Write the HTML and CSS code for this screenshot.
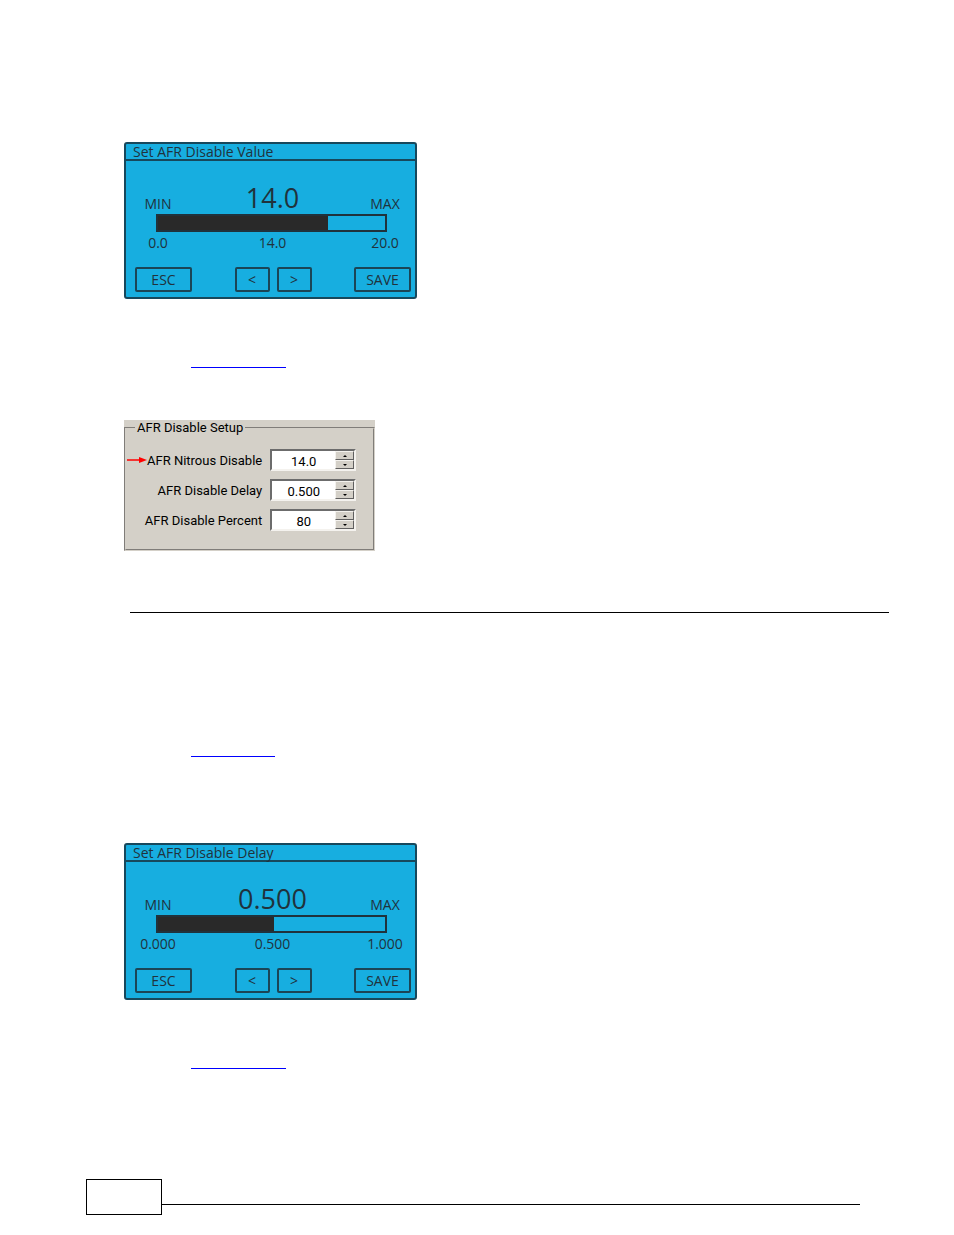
FILE: index.html
```html
<!DOCTYPE html>
<html lang="en">
<head>
    <meta charset="UTF-8">
    <meta name="viewport" content="width=device-width, initial-scale=1.0">
    <title>AFR Disable</title>
    <link rel="stylesheet" href="styles.css">
</head>
<body>

    <main>
        <section class="screen">
            <h2>Set AFR Disable Value</h2>
            <div class="readings">
                <span>MIN</span>
                <strong>14.0</strong>
                <span>MAX</span>
            </div>
            <div class="bar"><div class="fill" style="width: 75%"></div></div>
            <div class="scale">
                <span>0.0</span>
                <span>14.0</span>
                <span>20.0</span>
            </div>
            <div class="buttons">
                <button type="button" class="wide">ESC</button>
                <div class="arrows">
                    <button type="button">&lt;</button>
                    <button type="button">&gt;</button>
                </div>
                <button type="button" class="wide">SAVE</button>
            </div>
        </section>

        <a href="#setup" class="link setup-link" aria-label="AFR Disable Setup"></a>

        <form class="setup" id="setup">
            <fieldset>
                <legend>AFR Disable Setup</legend>
                <div class="row">
                    <svg class="pointer" width="20" height="8" viewBox="0 0 20 8" aria-hidden="true">
                        <path d="M0 4H14" stroke="#f00" stroke-width="1.5"/>
                        <path d="M12 1L20 4L12 7Z" fill="#f00"/>
                    </svg>
                    <label for="nitrous">AFR Nitrous Disable</label>
                    <div class="spinner">
                        <input type="text" id="nitrous" value="14.0">
                        <div class="steps">
                            <button type="button" class="up" aria-label="Increase"></button>
                            <button type="button" class="down" aria-label="Decrease"></button>
                        </div>
                    </div>
                </div>
                <div class="row">
                    <label for="delay">AFR Disable Delay</label>
                    <div class="spinner">
                        <input type="text" id="delay" value="0.500">
                        <div class="steps">
                            <button type="button" class="up" aria-label="Increase"></button>
                            <button type="button" class="down" aria-label="Decrease"></button>
                        </div>
                    </div>
                </div>
                <div class="row">
                    <label for="percent">AFR Disable Percent</label>
                    <div class="spinner">
                        <input type="text" id="percent" value="80">
                        <div class="steps">
                            <button type="button" class="up" aria-label="Increase"></button>
                            <button type="button" class="down" aria-label="Decrease"></button>
                        </div>
                    </div>
                </div>
            </fieldset>
        </form>

        <hr>

        <a href="#delay-screen" class="link short delay-link" aria-label="AFR Disable Delay"></a>

        <section class="screen" id="delay-screen">
            <h2>Set AFR Disable Delay</h2>
            <div class="readings">
                <span>MIN</span>
                <strong>0.500</strong>
                <span>MAX</span>
            </div>
            <div class="bar"><div class="fill" style="width: 51%"></div></div>
            <div class="scale">
                <span>0.000</span>
                <span>0.500</span>
                <span>1.000</span>
            </div>
            <div class="buttons">
                <button type="button" class="wide">ESC</button>
                <div class="arrows">
                    <button type="button">&lt;</button>
                    <button type="button">&gt;</button>
                </div>
                <button type="button" class="wide">SAVE</button>
            </div>
        </section>

        <a href="#setup" class="link setup-link" aria-label="AFR Disable Setup"></a>
    </main>

    <footer>
        <div class="page-number"></div>
        <div class="footer-line"></div>
    </footer>

</body>
</html>
```

FILE: styles.css
```css
* {
    box-sizing: border-box;
}

body {
    margin: 0;
    background-color: white;
    font-family: Roboto, "Liberation Sans", Arial, sans-serif;
    font-size: 13px;
}

main {
    padding: 142px 65px 0 124px;
}

/* device screens */
.screen {
    width: 293px;
    background-color: #17aee0;
    border: 2px solid #17485c;
    border-radius: 3px;
    color: #20323c;
    font-family: "Open Sans", "Noto Sans", sans-serif;
    font-size: 14px;
    padding-bottom: 5px;
}

.screen h2 {
    margin: 0;
    height: 17px;
    padding-left: 7px;
    border-bottom: 2px solid #17485c;
    font-size: 14px;
    font-weight: normal;
    line-height: 15px;
}

.readings,
.scale {
    display: grid;
    grid-template-columns: 64px 1fr 60px;
    text-align: center;
}

.readings {
    align-items: end;
    padding-top: 21px;
    line-height: 20px;
}

.readings strong {
    font-size: 27px;
    font-weight: normal;
    line-height: 32px;
}

.bar {
    height: 18px;
    margin: 0 28px 0 30px;
    border: 2px solid #20323c;
}

.fill {
    height: 100%;
    background-color: #292929;
}

.scale {
    padding-top: 1px;
    line-height: 20px;
}

.buttons {
    display: flex;
    justify-content: space-between;
    margin-top: 14px;
    padding: 0 4px 0 9px;
}

.arrows {
    display: flex;
    gap: 7px;
}

.screen button {
    width: 35px;
    height: 25px;
    padding: 0;
    background: none;
    border: 2px solid #1b4556;
    border-radius: 2px;
    color: inherit;
    font-family: inherit;
    font-size: 14px;
    line-height: 20px;
}

.screen .wide {
    width: 57px;
}

/* underlined links */
.link {
    display: block;
    width: 95px;
    height: 20px;
    margin-left: 67px;
    border-bottom: 1px solid #0000ff;
}

.short {
    width: 84px;
}

.setup-link {
    margin-top: 49px;
}

.delay-link {
    margin-top: 124px;
    margin-bottom: 86px;
}

/* setup box */
.setup {
    width: 251px;
    margin-top: 52px;
    background-color: #d4d0c8;
}

.setup fieldset {
    margin: 0;
    padding: 13px 17px 10px 1px;
    border: 2px groove #d4d0c8;
}

.setup legend {
    margin-left: 8px;
    padding: 0 2px;
    line-height: 16px;
}

.row {
    display: flex;
    align-items: center;
    justify-content: flex-end;
    gap: 8px;
    margin-bottom: 8px;
    white-space: nowrap;
}

.pointer {
    margin-right: -8px;
}

.spinner {
    display: flex;
    width: 86px;
    height: 22px;
    background-color: white;
    border: 2px solid;
    border-color: #6c6c6c #f4f2ee #f4f2ee #6c6c6c;
}

.spinner input {
    width: 63px;
    padding: 2px 0 0;
    border: none;
    background: none;
    font-family: inherit;
    font-size: 13px;
    text-align: center;
}

.steps {
    display: flex;
    flex: 1;
    flex-direction: column;
}

.steps button {
    display: flex;
    flex: 1;
    align-items: center;
    justify-content: center;
    padding: 0;
    background-color: #d4d0c8;
    border: 1px solid;
    border-color: #f4f2ee #606060 #606060 #f4f2ee;
}

.up::before,
.down::before {
    content: "";
    border: 2px solid transparent;
}

.up::before {
    border-top: none;
    border-bottom-color: black;
}

.down::before {
    border-bottom: none;
    border-top-color: black;
}

hr {
    height: 1px;
    margin: 61px 0 0 6px;
    border: none;
    background-color: black;
}

footer {
    display: flex;
    margin-top: 110px;
    padding: 0 94px 20px 86px;
}

.page-number {
    width: 76px;
    height: 36px;
    border: 1px solid black;
}

.footer-line {
    flex: 1;
    height: 26px;
    border-bottom: 1px solid black;
}
```
